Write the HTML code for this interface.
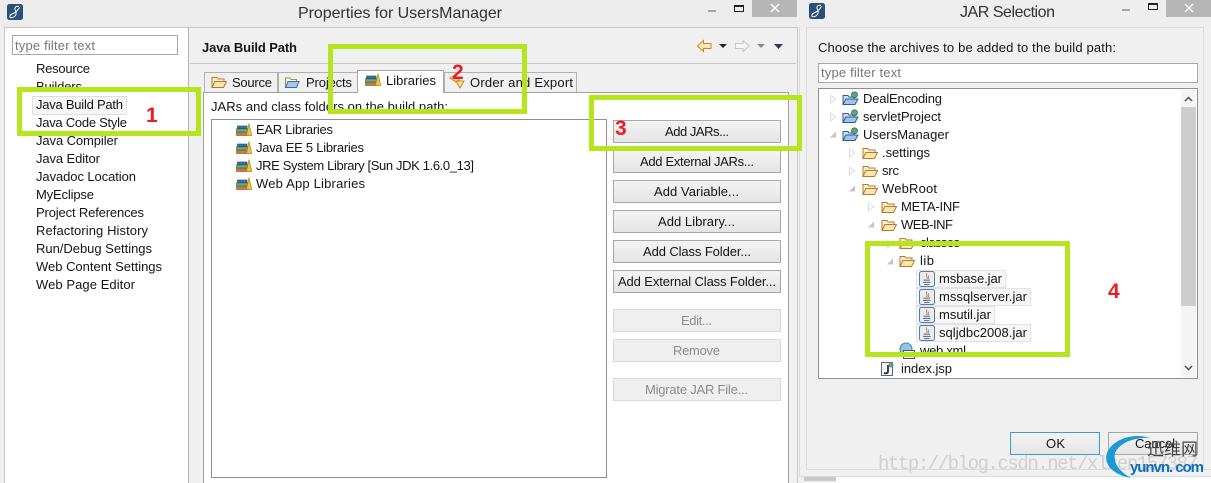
<!DOCTYPE html>
<html><head><meta charset="utf-8"><title>Properties for UsersManager</title>
<style>
html,body{margin:0;padding:0;background:#f0f0f0;width:1211px;height:483px;overflow:hidden}
svg{display:block;position:absolute;left:0;top:0}
text{font-family:"Liberation Sans","Noto Sans CJK SC",sans-serif;font-size:13px;fill:#151515}
.d{fill:#8c8c8c}
.f{fill:#767676}
.t{font-size:16px;fill:#333}
.n{font-family:"Liberation Sans",sans-serif;font-size:21px;font-weight:bold;fill:#ed1c24}
.b{fill:none;stroke:#b5e61d;stroke-width:5}
</style></head><body>
<svg width="1211" height="483" viewBox="0 0 1211 483" xmlns="http://www.w3.org/2000/svg">
<defs>
<linearGradient id="bt" x1="0" y1="0" x2="0" y2="1"><stop offset="0" stop-color="#f4f4f4"/><stop offset="1" stop-color="#e4e4e4"/></linearGradient>
<symbol id="eclipse" viewBox="0 0 16 16" width="16" height="16">
<rect x="0" y="0" width="16" height="16" rx="2.500" fill="#2a4f78"/>
<path d="M12 2.500C8.500 1.500 7 4 8.500 6.500C10 9 9 13 4.500 13.800C2 14 2.500 11 5 10C7.500 9 10.500 7 12.500 3.500" fill="none" stroke="#fff" stroke-width="1"/>
</symbol>
<symbol id="lib" viewBox="0 0 16 14" width="16" height="14">
<rect x="0.500" y="9" width="12" height="3.500" fill="#d0763a" stroke="#8d4c1f" stroke-width=".6"/>
<rect x="0.500" y="5.800" width="11" height="3.200" fill="#62b078" stroke="#2c6a3e" stroke-width=".6"/>
<rect x="1.500" y="3" width="9.500" height="2.800" fill="#3a74aa" stroke="#1d3e60" stroke-width=".6"/>
<path d="M10.500 12.500L13 0.500L15.800 12.500Z" fill="#f3c043" stroke="#b5831a" stroke-width=".7"/>
</symbol>
<symbol id="folder" viewBox="0 0 16 14" width="16" height="14">
<path d="M1 12.500V2.500H6L7 4H13V6.500" fill="#fdf0cc" stroke="#b77a2d"/>
<path d="M1 12.500L3.800 6.500H15.500L12.500 12.500Z" fill="#fce5af" stroke="#b77a2d"/>
</symbol>
<symbol id="proj" viewBox="0 0 17 15" width="17" height="15">
<path d="M1 13.500V4.500H6L7 6H12V8" fill="#cfe2f5" stroke="#315c8f"/>
<path d="M1 13.500L3.800 8H16L13 13.500Z" fill="#9cc4ec" stroke="#315c8f"/>
<circle cx="12.500" cy="3.800" r="3" fill="#5aa877" stroke="#26583d" stroke-width=".7"/>
</symbol>
<symbol id="jar" viewBox="0 0 16 16" width="16" height="16">
<rect x="0.500" y="0.500" width="15" height="15" rx="2" fill="#e6edf4" stroke="#5a7d9f"/>
<path d="M4 11.500H11.500M5 13.500H10.500" stroke="#6a7682" fill="none"/>
<path d="M8 2.500C6 4.500 9.500 5.500 7.500 8M10 4.500C9 5.500 10.500 6.500 9 8" stroke="#d9832e" fill="none"/>
<path d="M4.500 8.500H11V10.200H4.500Z" fill="#8a96a2"/>
</symbol>
<symbol id="open" viewBox="0 0 8 9" width="8" height="9"><path d="M1 7.500H7V1.500Z" fill="#c4c4c4"/></symbol>
<symbol id="closed" viewBox="0 0 8 10" width="8" height="10"><path d="M1.500 1L6.500 5L1.500 9Z" fill="#fff" stroke="#dcdcdc"/></symbol>
</defs>

<!-- backgrounds -->
<rect width="1211" height="483" fill="#f0f0f0"/>
<rect x="0" y="0" width="797" height="27" fill="#ececec"/>
<rect x="798" y="0" width="413" height="27" fill="#eeeeee"/>
<rect x="5" y="28" width="183" height="455" fill="#fff"/>
<rect x="204" y="92" width="584" height="391" fill="#fff"/>
<path d="M4.500 27.500H797.500M4.500 27V483M188.500 27V483M190 63.500H796M797.500 27V483" stroke="#c9c9c9" fill="none"/>
<path d="M188.500 27V483" stroke="#b4b4b4"/>
<path d="M788.500 92V483" stroke="#a0a0a0"/>
<path d="M203.500 92V483" stroke="#a0a0a0"/>
<path d="M799.500 27V476.500H1211" stroke="#dcdcdc" fill="none"/>
<path d="M806.500 27V469.500H1211M806.500 27.500H1203.500V469" stroke="#dcdcdc" fill="none"/>
<rect x="804" y="477" width="32" height="4" fill="#c8c8c8"/>
<rect x="836" y="477" width="375" height="6" fill="#fff"/>

<!-- title bars -->
<use href="#eclipse" x="7" y="4"/>
<use href="#eclipse" x="809" y="3"/>
<text class="t" x="298" y="18" textLength="204">Properties for UsersManager</text>
<text class="t" x="960" y="17" textLength="95">JAR Selection</text>
<rect x="708" y="10" width="8" height="2" fill="#a6a6a6"/>
<rect x="734.500" y="5.500" width="9" height="6" fill="none" stroke="#222"/><rect x="734" y="5" width="10" height="2" fill="#222"/>
<rect x="752" y="0" width="45" height="17" fill="#b6b6b6"/>
<path d="M771 4L779 12M779 4L771 12" stroke="#fff" stroke-width="1.500"/>
<rect x="1122" y="9" width="8" height="2" fill="#a6a6a6"/>
<rect x="1148.500" y="3.500" width="9" height="6" fill="none" stroke="#222"/><rect x="1148" y="3" width="10" height="2" fill="#222"/>
<rect x="1166" y="0" width="45" height="17" fill="#b6b6b6"/>
<path d="M1185 4L1193 12M1193 4L1185 12" stroke="#fff" stroke-width="1.500"/>

<!-- left filter and tree -->
<rect x="12.500" y="35.500" width="165" height="19" fill="#fff" stroke="#a8a8a8"/>
<text class="f" x="15" y="50" textLength="80">type filter text</text>
<rect x="32.500" y="96.500" width="94" height="18" fill="#f6f6f6" stroke="#dedede"/>
<g>
<text x="36" y="73" textLength="54">Resource</text>
<text x="36" y="91" textLength="46">Builders</text>
<text x="36" y="109" textLength="87">Java Build Path</text>
<text x="36" y="127" textLength="91">Java Code Style</text>
<text x="36" y="145" textLength="82">Java Compiler</text>
<text x="36" y="163" textLength="64">Java Editor</text>
<text x="36" y="181" textLength="100">Javadoc Location</text>
<text x="36" y="199" textLength="58">MyEclipse</text>
<text x="36" y="217" textLength="108">Project References</text>
<text x="36" y="235" textLength="112">Refactoring History</text>
<text x="36" y="253" textLength="116">Run/Debug Settings</text>
<text x="36" y="271" textLength="126">Web Content Settings</text>
<text x="36" y="289" textLength="99">Web Page Editor</text>
</g>

<!-- header -->
<text x="202" y="52" textLength="95" style="font-weight:bold">Java Build Path</text>
<path d="M697.500 46L703.500 40.500V43.500H711V48.500H703.500V51.500Z" fill="#fbe7b5" stroke="#c98a22"/>
<path d="M719 44H727L723 48Z" fill="#222"/>
<path d="M749 46L743 40.500V43.500H735.500V48.500H743V51.500Z" fill="#f7f7f7" stroke="#c8c8c8"/>
<path d="M757 44H765L761 48Z" fill="#8a8a8a"/>
<path d="M774 44H783L778.500 49Z" fill="#37376f"/>

<!-- tabs -->
<rect x="204.500" y="72.500" width="73" height="20" fill="#f0f0f0" stroke="#b0b0b0"/>
<rect x="278.500" y="72.500" width="79" height="20" fill="#f0f0f0" stroke="#b0b0b0"/>
<rect x="444.500" y="72.500" width="132" height="20" fill="#f0f0f0" stroke="#b0b0b0"/>
<path d="M203 92.500H789" stroke="#a0a0a0"/>
<path d="M357.500 93V70.500H443.500V93" fill="#fff" stroke="#a8a8a8"/>
<rect x="358" y="92" width="85" height="2" fill="#fff"/>
<use href="#folder" x="211" y="75"/>
<g transform="translate(284,75)"><path d="M1.500 12.500V3H6L7 4.500H12.500V6.500" fill="#fdf6e0" stroke="#a98a4a"/><path d="M1.500 12.500L4 6.500H15L12.500 12.500Z" fill="#a9c7ea" stroke="#3f6aa0"/></g>
<use href="#lib" x="365" y="73"/>
<path d="M450 78L455 75L459 80L456 82ZM456 81H464L460 88Z" fill="#f8dd9d" stroke="#c88a25"/>
<text x="232" y="87" textLength="40">Source</text>
<text x="306" y="87" textLength="46">Projects</text>
<text x="386" y="85" textLength="50">Libraries</text>
<text x="470" y="87" textLength="103">Order and Export</text>
<text x="211" y="111" textLength="237">JARs and class folders on the build path:</text>

<!-- list -->
<rect x="211.500" y="119.500" width="395" height="358" fill="#fff" stroke="#8a9097"/>
<use href="#lib" x="236" y="123"/><use href="#lib" x="236" y="141"/><use href="#lib" x="236" y="159"/><use href="#lib" x="236" y="177"/>
<text x="256" y="134" textLength="77">EAR Libraries</text>
<text x="256" y="152" textLength="108">Java EE 5 Libraries</text>
<text x="256" y="170" textLength="218">JRE System Library [Sun JDK 1.6.0_13]</text>
<text x="256" y="188" textLength="109">Web App Libraries</text>

<!-- buttons -->
<g fill="url(#bt)" stroke="#a8a8a8">
<rect x="613.500" y="120.500" width="167" height="22"/>
<rect x="613.500" y="150.500" width="167" height="22"/>
<rect x="613.500" y="180.500" width="167" height="22"/>
<rect x="613.500" y="210.500" width="167" height="22"/>
<rect x="613.500" y="240.500" width="167" height="22"/>
<rect x="613.500" y="270.500" width="167" height="22"/>
</g>
<g fill="#efefef" stroke="#d9d9d9">
<rect x="613.500" y="309.500" width="167" height="22"/>
<rect x="613.500" y="339.500" width="167" height="22"/>
<rect x="613.500" y="378.500" width="167" height="22"/>
</g>
<text x="665" y="136" textLength="64">Add JARs...</text>
<text x="640" y="166" textLength="114">Add External JARs...</text>
<text x="654" y="196" textLength="85">Add Variable...</text>
<text x="658" y="226" textLength="77">Add Library...</text>
<text x="643" y="256" textLength="108">Add Class Folder...</text>
<text x="618" y="286" textLength="158">Add External Class Folder...</text>
<text class="d" x="681" y="325" textLength="31">Edit...</text>
<text class="d" x="673" y="355" textLength="47">Remove</text>
<text class="d" x="645" y="394" textLength="103">Migrate JAR File...</text>

<!-- JAR selection -->
<text x="818" y="52" textLength="298">Choose the archives to be added to the build path:</text>
<rect x="818.500" y="63.500" width="379" height="19" fill="#fff" stroke="#a8a8a8"/>
<text class="f" x="821" y="77" textLength="80">type filter text</text>
<rect x="818.500" y="88.500" width="379" height="290" fill="#fff" stroke="#8a9097"/>
<rect x="1181" y="90" width="15" height="287" fill="#f4f4f4"/>
<rect x="1181" y="107" width="15" height="199" fill="#cdcdcd"/>
<path d="M1185 101L1188.500 97.500L1192 101" fill="none" stroke="#505050" stroke-width="1.500"/>
<path d="M1185 366L1188.500 369.500L1192 366" fill="none" stroke="#505050" stroke-width="1.500"/>

<use href="#closed" x="829" y="94"/><use href="#closed" x="829" y="112"/><use href="#open" x="829" y="130"/>
<use href="#closed" x="848" y="148"/><use href="#closed" x="848" y="166"/><use href="#open" x="848" y="184"/>
<use href="#closed" x="867" y="202"/><use href="#open" x="867" y="220"/>
<use href="#closed" x="886" y="239"/><use href="#open" x="886" y="257"/>
<use href="#proj" x="842" y="91"/><use href="#proj" x="842" y="109"/><use href="#proj" x="842" y="127"/>
<use href="#folder" x="862" y="146"/><use href="#folder" x="862" y="164"/><use href="#folder" x="862" y="182"/>
<use href="#folder" x="881" y="200"/><use href="#folder" x="881" y="218"/>
<use href="#folder" x="899" y="236"/><use href="#folder" x="899" y="254"/>

<g fill="#f6f6f6" stroke="#e2e2e2">
<rect x="916.500" y="270.500" width="89" height="17"/>
<rect x="916.500" y="288.500" width="114" height="17"/>
<rect x="916.500" y="306.500" width="78" height="17"/>
<rect x="916.500" y="324.500" width="114" height="17"/>
</g>
<use href="#jar" x="919" y="271"/><use href="#jar" x="919" y="289"/><use href="#jar" x="919" y="307"/><use href="#jar" x="919" y="325"/>

<circle cx="906" cy="349" r="6" fill="#8fc6ea" stroke="#4b7f98"/>
<rect x="903.500" y="350.500" width="11" height="8" fill="#fff" stroke="#555"/>
<rect x="881.500" y="362.500" width="11" height="13" fill="#f5f5f5" stroke="#666"/>
<path d="M888 365V372Q887 374 884 373" fill="none" stroke="#1d2a55" stroke-width="1.800"/>
<circle cx="891" cy="365" r="2.500" fill="#5aa06f"/>

<text x="863" y="103" textLength="79">DealEncoding</text>
<text x="863" y="121" textLength="78">servletProject</text>
<text x="863" y="139" textLength="86">UsersManager</text>
<text x="882" y="157" textLength="48">.settings</text>
<text x="882" y="175" textLength="17">src</text>
<text x="882" y="193" textLength="55">WebRoot</text>
<text x="901" y="211" textLength="59">META-INF</text>
<text x="901" y="229" textLength="52">WEB-INF</text>
<text x="920" y="247" textLength="40">classes</text>
<text x="920" y="265" textLength="14">lib</text>
<text x="939" y="283" textLength="63">msbase.jar</text>
<text x="939" y="301" textLength="88">mssqlserver.jar</text>
<text x="939" y="319" textLength="52">msutil.jar</text>
<text x="939" y="337" textLength="88">sqljdbc2008.jar</text>
<text x="920" y="355" textLength="46">web.xml</text>
<text x="901" y="373" textLength="51">index.jsp</text>

<rect x="1010.500" y="432.500" width="89" height="22" fill="url(#bt)" stroke="#3c9ae8"/>
<rect x="1108.500" y="432.500" width="89" height="22" fill="url(#bt)" stroke="#a8a8a8"/>
<text x="1046" y="448" textLength="19">OK</text>
<text x="1135" y="448" textLength="40">Cancel</text>

<!-- annotations -->
<rect class="b" x="19.500" y="89.500" width="179" height="44"/>
<rect class="b" x="330.500" y="46.500" width="194" height="65"/>
<rect class="b" x="591.500" y="97.500" width="208" height="51"/>
<rect class="b" x="867.500" y="243.500" width="200" height="111"/>
<text class="n" x="146" y="122">1</text>
<text class="n" x="452" y="79">2</text>
<text class="n" x="615" y="135">3</text>
<text class="n" x="1108" y="298">4</text>

<!-- watermarks -->
<text x="878" y="469" textLength="320" style="font-family:'Liberation Mono',monospace;font-size:19px;fill:#d0d0d0">http://blog.csdn.net/xlzen157387</text>
<path d="M1150 438C1132 432 1112 440 1107 453C1103 465 1114 475 1131 478C1119 471 1113 463 1115 453C1119 443 1134 437 1150 438Z" fill="#1b9ad6"/>
<text x="1147" y="455" textLength="51" style="font-size:17px;fill:#444">迅维网</text>
<text x="1130" y="472" textLength="74" style="font-size:15px;font-weight:bold;fill:#0f6fb4">yunvn. com</text>
</svg>
</body></html>
